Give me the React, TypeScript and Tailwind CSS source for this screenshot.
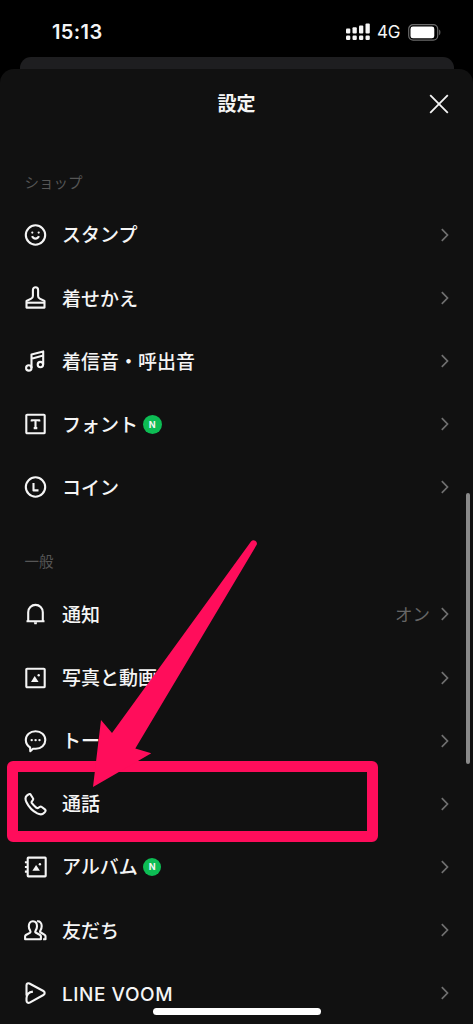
import type { ReactNode } from "react";

type Row = {
  label: string;
  icon: ReactNode;
  isNew?: boolean;
  value?: string;
};

const shopRows: Row[] = [
  {
    label: "スタンプ",
    icon: (
      <>
        <circle cx="12" cy="12" r="9.7" />
        <path d="M8.6 13.2a3.6 3.6 0 0 0 6.8 0" />
        <circle cx="8.8" cy="9.6" r="1.1" fill="currentColor" stroke="none" />
        <circle cx="15.2" cy="9.6" r="1.1" fill="currentColor" stroke="none" />
      </>
    ),
  },
  {
    label: "着せかえ",
    icon: (
      <>
        <path d="M3 21.6V15l4.7-2.4a3 3 0 0 0 1.7-2.7V3.9a2.6 2.6 0 0 1 5.2 0v6a3 3 0 0 0 1.7 2.7L21 15v6.6z" />
        <path d="M3 16.7h18" />
      </>
    ),
  },
  {
    label: "着信音・呼出音",
    icon: (
      <>
        <circle cx="5.3" cy="18.9" r="2.7" />
        <circle cx="16.9" cy="15.6" r="2.7" />
        <path d="M8 18.9V5.6l11.7-3.2v13.2M8 9.7l11.7-3.2" />
      </>
    ),
  },
  {
    label: "フォント",
    isNew: true,
    icon: (
      <>
        <rect x="2.8" y="2.8" width="18.4" height="18.4" rx="0.8" />
        <path d="M8.2 9.6V8.2h7.6v1.4M12 8.2v7.8M10.2 16.1h3.6" />
      </>
    ),
  },
  {
    label: "コイン",
    icon: (
      <>
        <circle cx="12" cy="12" r="9.7" />
        <path d="M10 8v7.4h5" />
      </>
    ),
  },
];

const generalRows: Row[] = [
  {
    label: "通知",
    value: "オン",
    icon: (
      <>
        <path d="M4.7 19V10.2a7.3 7.3 0 0 1 14.6 0V19M3 19.2h18" />
        <path d="M10.4 20.2h3.2l-.5 2.1h-2.2z" fill="currentColor" stroke="none" />
      </>
    ),
  },
  {
    label: "写真と動画",
    icon: (
      <>
        <rect x="2.8" y="2.8" width="18.4" height="18.4" rx="0.8" />
        <path d="M7.5 15.9 11.2 10l3.9 5.9z" fill="currentColor" stroke="none" />
        <circle cx="15.2" cy="9.3" r="1.2" fill="currentColor" stroke="none" />
      </>
    ),
  },
  {
    label: "トーク",
    icon: (
      <>
        <path d="M6.6 18.5A9.3 9.3 0 0 1 2.3 11C2.3 5.8 6.5 2.3 12.1 2.3s9.7 3.7 9.7 8.7-4.1 8.8-9.5 8.8h-2.8l-2.7 2.4z" />
        <circle cx="8.2" cy="11.1" r="1.2" fill="currentColor" stroke="none" />
        <circle cx="12.1" cy="11.1" r="1.2" fill="currentColor" stroke="none" />
        <circle cx="16" cy="11.1" r="1.2" fill="currentColor" stroke="none" />
      </>
    ),
  },
  {
    label: "通話",
    icon: (
      <path d="M5.1 2.3 3.6 3.4C1.7 4.9 1.7 7.6 3 10.2c2.3 4.8 6.2 8.8 10.8 11.2 2.7 1.3 5.2 1.2 6.9-.6l1-1.2c.5-.7.4-1.6-.3-2.2l-3.1-2.4c-.7-.5-1.5-.5-2.2 0l-1.3.9c-.6.4-1.2.4-1.8-.1a25 25 0 0 1-4.6-4.7c-.4-.6-.4-1.2 0-1.7l.9-1.2c.5-.7.5-1.5 0-2.2L7.2 2.7c-.5-.7-1.4-.9-2.1-.4z" />
    ),
  },
  {
    label: "アルバム",
    isNew: true,
    icon: (
      <>
        <rect x="4.2" y="2.6" width="18" height="18.8" rx="0.6" />
        <path d="M1.4 7.2h2.8M1.4 12h2.8M1.4 16.6h2.8" />
        <path d="M8.9 15.8 12.6 10l3.8 5.8z" fill="currentColor" stroke="none" />
        <circle cx="16.4" cy="9.3" r="1.2" fill="currentColor" stroke="none" />
      </>
    ),
  },
  {
    label: "友だち",
    icon: (
      <>
        <path d="M1.6 21.2v-2.8c0-.6.3-1.1.8-1.4l3.9-2.2c.8-.5.9-1.3.4-2.1-.9-1.2-1.4-2.6-1.4-4.4 0-3.2 1.5-5 4.1-5s4.1 1.8 4.1 5c0 1.8-.5 3.2-1.4 4.4-.5.8-.4 1.6.4 2.1l4.1 2.2c.5.3.8.8.8 1.4v2.8z" />
        <path d="M13.6 3.3c2.8-.4 4.6 1.7 4.6 4.8 0 1.8-.5 3.2-1.3 4.4-.5.8-.4 1.5.4 2l3.9 2.4c.5.3.8.8.8 1.4v2.9h-2.4" />
      </>
    ),
  },
  {
    label: "LINE VOOM",
    icon: (
      <path d="M3 14.4V4.2c0-1.6 1.5-2.4 2.9-1.7l14 7.5c1.7.9 1.7 3.1 0 4L6.2 21.6c-1.6.8-3.2-.2-3.2-2v-2.4c0-3.3 1.8-6 6.4-6.6" />
    ),
  },
];

function Chevron() {
  return (
    <svg
      className="h-3.5 w-2.5 shrink-0 text-[#6f6f6f]"
      viewBox="0 0 10 14"
      fill="none"
      stroke="currentColor"
      strokeWidth="1.7"
    >
      <path d="M1.8 1.2 7.5 7l-5.7 5.8" />
    </svg>
  );
}

function SettingRow({ row }: { row: Row }) {
  return (
    <li className="flex h-[63.15px] items-center pl-[23px] pr-[23px]">
      <svg
        className="mr-[14px] h-6 w-[25px] shrink-0"
        viewBox="-0.5 0 25 24"
        fill="none"
        stroke="currentColor"
        strokeWidth="2.1"
        strokeLinejoin="round"
      >
        {row.icon}
      </svg>
      <span
        className={`pt-[3px] text-[19px] leading-6 font-medium whitespace-nowrap ${
          row.label === "LINE VOOM" ? "tracking-[0.55px]" : ""
        }`}
      >
        {row.label}
      </span>
      {row.isNew && (
        <span className="ml-[5px] flex size-[18.5px] items-center justify-center rounded-full bg-[#0dbd54] text-[9px] font-bold">
          N
        </span>
      )}
      <span className="ml-auto pt-px pr-[10px] text-[17.5px] leading-6 text-[#666]">{row.value}</span>
      <Chevron />
    </li>
  );
}

function Section({ title, rows }: { title: string; rows: Row[] }) {
  return (
    <section>
      <h2 className="flex h-[63.8px] items-center pt-[22px] pl-[24.5px] text-[14.5px] font-normal text-[#565656]">
        {title}
      </h2>
      <ul>
        {rows.map((row) => (
          <SettingRow key={row.label} row={row} />
        ))}
      </ul>
    </section>
  );
}

function StatusBar() {
  return (
    <div className="flex h-[57px] shrink-0 items-center justify-between pt-[7px] pr-[31px] pl-[52px]">
      <span className="text-[20px] leading-6 font-semibold tracking-[0.4px]">15:13</span>
      <div className="flex items-center">
        <svg className="h-[18px] w-6" viewBox="0 0 24 18" fill="currentColor">
          <rect x="0" y="5.5" width="4.3" height="5" rx="1" />
          <rect x="6.5" y="4.3" width="4.3" height="6.2" rx="1" />
          <rect x="13" y="2.4" width="4.3" height="8.1" rx="1" />
          <rect x="19.5" y="0.4" width="4.3" height="10.1" rx="1" />
          <rect x="0" y="12.6" width="4.3" height="4.4" rx="1.2" />
          <rect x="6.5" y="12.6" width="4.3" height="4.4" rx="1.2" />
          <rect x="13" y="12.6" width="4.3" height="4.4" rx="1.2" />
          <rect x="19.5" y="12.6" width="4.3" height="4.4" rx="1.2" />
        </svg>
        <span className="ml-[7px] w-6 text-[17px] leading-6 tracking-[-0.3px]">4G</span>
        <svg className="ml-[7px] h-[17px] w-[34px]" viewBox="0 0 34 17" fill="none">
          <rect x="0.7" y="0.7" width="29" height="15.4" rx="4.4" stroke="#6b6b6b" strokeWidth="1.2" />
          <rect x="2.5" y="2.5" width="23.8" height="11.8" rx="2.4" fill="#fff" />
          <path d="M31.2 5.6c1.6.6 1.6 5 0 5.6z" fill="#6b6b6b" />
        </svg>
      </div>
    </div>
  );
}

// highlight frame and arrow drawn over the 通話 row
function Annotation() {
  return (
    <>
      <div className="absolute top-[761px] left-[7px] h-[80.5px] w-[370.5px] rounded-[6px] border-[11px] border-[#ff0d5b]" />
      <svg className="absolute top-[530px] left-[80px] h-[270px] w-[190px]" viewBox="80 530 190 270">
        <path
          d="M93 787 101 720l11 13L251.2 541.2a3.4 3.4 0 0 1 5.6 3.4L135.3 748.5 151.3 753.3z"
          fill="#ff0d5b"
        />
      </svg>
    </>
  );
}

export default function App() {
  return (
    <div className="relative flex h-[1024px] w-[473px] flex-col overflow-hidden bg-black font-['Inter','Noto_Sans_CJK_JP',sans-serif] text-[#f5f5f5]">
      <StatusBar />
      <div className="mx-[19.5px] h-3 shrink-0 rounded-t-[11px] bg-[#1e1e20]" />
      <main className="min-h-0 flex-1 rounded-t-[14px] bg-[#111]">
        <header className="grid h-[70.5px] grid-cols-[1fr_auto_1fr] items-center px-6 pb-[1.5px]">
          <h1 className="col-start-2 pt-[3px] text-[19px] leading-6 font-bold">設定</h1>
          <svg
            className="size-5 justify-self-end"
            viewBox="0 0 20 20"
            fill="none"
            stroke="currentColor"
            strokeWidth="1.8"
          >
            <path d="m1.2 1.2 17.6 17.6M18.8 1.2 1.2 18.8" />
          </svg>
        </header>
        <Section title="ショップ" rows={shopRows} />
        <Section title="一般" rows={generalRows} />
      </main>
      <div className="absolute top-[493px] left-[465.5px] h-[271px] w-1 rounded-full bg-[#8a8a8a]" />
      <Annotation />
      <div className="absolute top-[1008px] left-[152.5px] h-[6.5px] w-[168.5px] rounded-full bg-white" />
    </div>
  );
}
